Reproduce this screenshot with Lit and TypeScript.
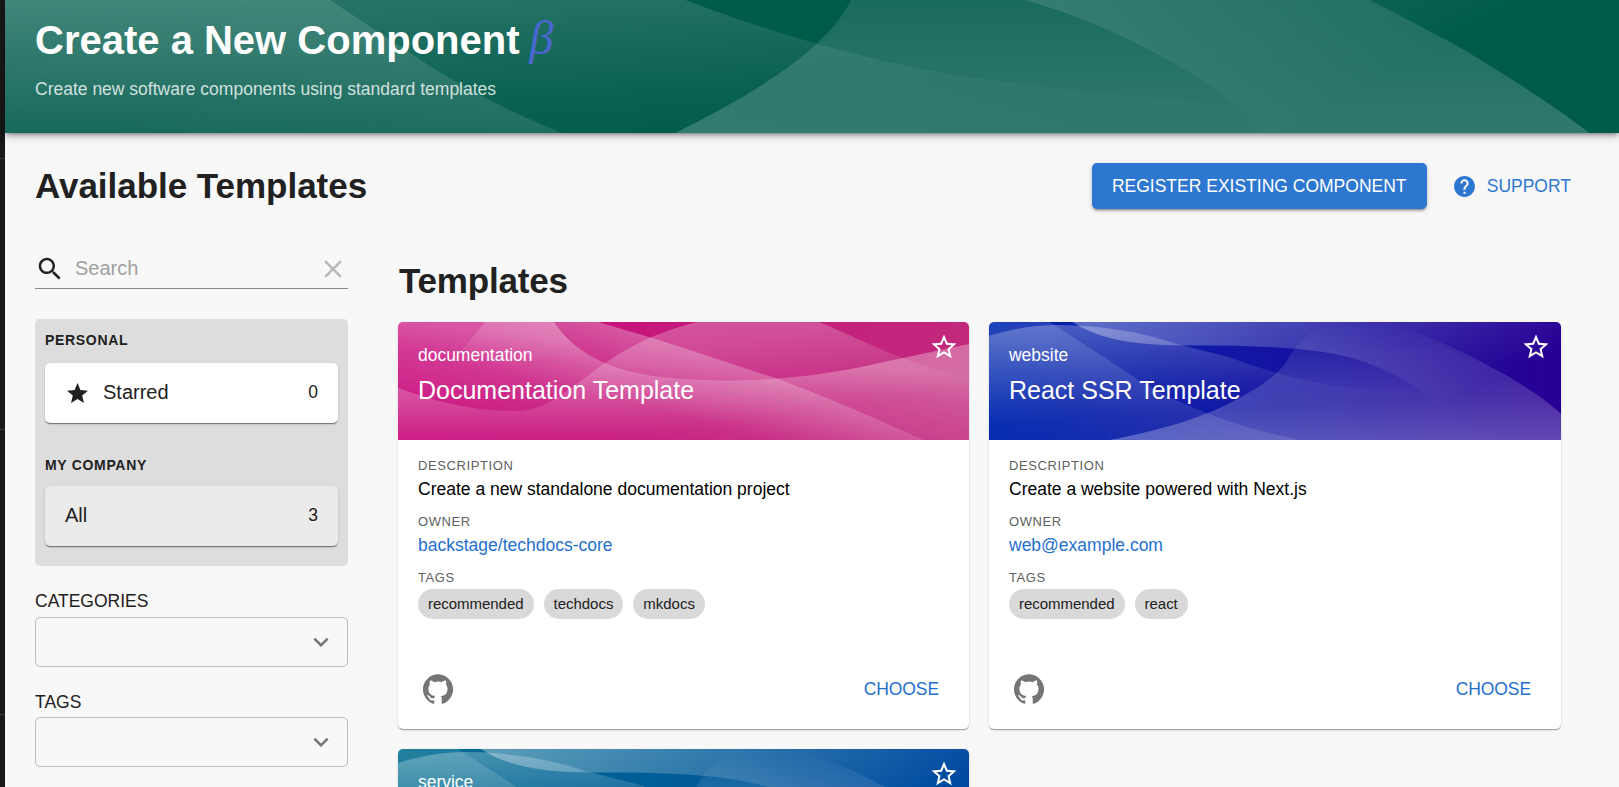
import { LitElement, html, svg, css, nothing } from "lit";
import { customElement, property } from "lit/decorators.js";

const icons = {
  search:
    "M15.5 14h-.79l-.28-.27C15.41 12.59 16 11.11 16 9.5 16 5.91 13.09 3 9.5 3S3 5.91 3 9.5 5.91 16 9.5 16c1.61 0 3.09-.59 4.23-1.57l.27.28v.79l5 4.99L20.49 19l-4.99-5zm-6 0C7.01 14 5 11.99 5 9.5S7.01 5 9.5 5 14 7.01 14 9.5 11.99 14 9.5 14z",
  clear:
    "M19 6.41L17.59 5 12 10.59 6.41 5 5 6.41 10.59 12 5 17.59 6.41 19 12 13.41 17.59 19 19 17.59 13.41 12z",
  star: "M12 17.27L18.18 21l-1.64-7.03L22 9.24l-7.19-.61L12 2 9.19 8.63 2 9.24l5.46 4.73L5.82 21z",
  starBorder:
    "M22 9.24l-7.19-.62L12 2 9.19 8.63 2 9.24l5.46 4.73L5.82 21 12 17.27 18.18 21l-1.63-7.03L22 9.24zM12 15.4l-3.76 2.27 1-4.28-3.32-2.88 4.38-.38L12 6.1l1.71 4.04 4.38.38-3.32 2.88 1 4.28L12 15.4z",
  expand: "M16.59 8.59L12 13.17 7.41 8.59 6 10l6 6 6-6z",
  help: "M12 2C6.48 2 2 6.48 2 12s4.48 10 10 10 10-4.48 10-10S17.52 2 12 2zm1 17h-2v-2h2v2zm2.07-7.75l-.9.92C13.45 12.9 13 13.5 13 15h-2v-.5c0-1.1.45-2.1 1.17-2.83l1.24-1.26c.37-.36.59-.86.59-1.41 0-1.1-.9-2-2-2s-2 .9-2 2H8c0-2.21 1.79-4 4-4s4 1.79 4 4c0 .88-.36 1.68-.93 2.25z",
  github:
    "M12 .3a12 12 0 0 0-3.8 23.4c.6.1.8-.3.8-.6v-2c-3.3.7-4-1.6-4-1.6-.6-1.4-1.4-1.8-1.4-1.8-1-.7.1-.7.1-.7 1.2 0 1.9 1.2 1.9 1.2 1 1.8 2.8 1.3 3.5 1 0-.8.4-1.3.7-1.6-2.7-.3-5.5-1.3-5.5-6 0-1.2.5-2.3 1.3-3.1-.2-.4-.6-1.6 0-3.2 0 0 1-.3 3.4 1.2a11.5 11.5 0 0 1 6 0c2.3-1.5 3.3-1.2 3.3-1.2.6 1.6.2 2.8 0 3.2.9.8 1.3 1.9 1.3 3.2 0 4.6-2.8 5.6-5.5 5.9.5.4.9 1 .9 2.2v3.3c0 .3.1.7.8.6A12 12 0 0 0 12 .3",
};

const icon = (d: string, cls: string) =>
  html`<svg class="icon ${cls}" viewBox="0 0 24 24" aria-hidden="true"><path d=${d}></path></svg>`;

const stop = (o: number, a: number) =>
  svg`<stop offset=${o} stop-color="#fff" stop-opacity=${a}></stop>`;

@customElement("wave-art")
class WaveArt extends LitElement {
  @property() shape = "wave";
  static styles = css`
    :host { display: block; width: 100%; height: 100%; }
    svg { display: block; width: 100%; height: 100%; }
  `;
  render() {
    if (this.shape === "hills") {
      return html`<svg viewBox="0 0 571 118" preserveAspectRatio="none">
        <defs>
          <linearGradient id="r" gradientUnits="userSpaceOnUse" x1="0" y1="-35" x2="-15" y2="117">${stop(0, 0.31)}${stop(0.23, 0.31)}${stop(0.4, 0.2)}${stop(0.62, 0.13)}${stop(1, 0)}</linearGradient>
          <linearGradient id="s" gradientUnits="userSpaceOnUse" x1="0" y1="-50" x2="-17.6" y2="25">${stop(0, 0.3)}${stop(1, 0)}</linearGradient>
          <linearGradient id="q" gradientUnits="userSpaceOnUse" x1="0" y1="20" x2="19" y2="147">${stop(0, 0.3)}${stop(0.4, 0.21)}${stop(1, 0)}</linearGradient>
        </defs>
        <path fill="url(#r)" d="M0 0H156C175 29 208 47 255 54C330 63 410 58 481 41L571 22V118H0Z"></path>
        <path fill="url(#s)" d="M87 0H200L261 18L380 57C440 79 482 99 526 118H0L41 56Z"></path>
        <path fill="url(#q)" d="M0 66C35 79 78 90 120 89C172 88 196 24 300 0H421C463 17 506 42 571 56V118H0Z"></path>
      </svg>`;
    }
    return html`<svg viewBox="0 0 1368 400" preserveAspectRatio="xMidYMid slice">
      <defs>
        <linearGradient id="a" gradientUnits="userSpaceOnUse" x1="0" y1="76" x2="14" y2="304">${stop(0, 0.27)}${stop(0.37, 0.155)}${stop(0.8, 0.035)}${stop(1, 0)}</linearGradient>
        <linearGradient id="b" gradientUnits="userSpaceOnUse" x1="0" y1="66" x2="0" y2="341">${stop(0, 0)}${stop(0.28, 0.1)}${stop(0.69, 0.19)}${stop(1, 0.28)}</linearGradient>
        <linearGradient id="c" gradientUnits="userSpaceOnUse" x1="0" y1="59" x2="-93" y2="370">${stop(0, 0.13)}${stop(1, 0)}</linearGradient>
        <linearGradient id="d" gradientUnits="userSpaceOnUse" x1="250" y1="66" x2="494" y2="553">${stop(0, 0.34)}${stop(1, 0)}</linearGradient>
      </defs>
      <path fill="url(#c)" d="M0 0H95C110 25 122 42 145 59L276 144L359 199C395 222 432 240 471 256C550 290 630 318 734 339L960 400H0Z"></path>
      <path fill="url(#a)" d="M0 92C60 74 115 65 172 66C300 68 400 94 451 112L578 144C650 172 760 205 857 214C1000 234 1150 238 1368 240V400H0Z"></path>
      <path fill="url(#b)" d="M100 400L289 341C410 318 505 288 569 256C655 213 698 180 717 144C745 98 770 78 820 66H968C1070 96 1150 140 1230 182C1290 218 1340 250 1368 279V400Z"></path>
      <path fill="url(#d)" d="M120 0C150 20 170 44 199 59C270 104 355 114 465 115C600 114 760 117 866 144C950 168 1040 220 1067 256L1130 330L1368 400V0Z"></path>
    </svg>`;
  }
}

interface Template {
  kind: string;
  theme: string;
  title?: string;
  description?: string;
  owner?: string;
  tags?: string[];
}

const templates: Template[] = [
  {
    kind: "documentation",
    title: "Documentation Template",
    theme: "pink",
    description: "Create a new standalone documentation project",
    owner: "backstage/techdocs-core",
    tags: ["recommended", "techdocs", "mkdocs"],
  },
  {
    kind: "website",
    title: "React SSR Template",
    theme: "blue",
    description: "Create a website powered with Next.js",
    owner: "web@example.com",
    tags: ["recommended", "react"],
  },
  { kind: "service", theme: "marine" },
];

@customElement("template-card")
class TemplateCard extends LitElement {
  @property({ attribute: false }) item!: Template;
  static styles = css`
    :host { display: flex; flex-direction: column; height: 407px; border-radius: 5px; overflow: hidden; background: #fff; box-shadow: 0 2px 1px -1px rgba(0,0,0,.2), 0 1px 1px rgba(0,0,0,.14), 0 1px 3px rgba(0,0,0,.12); }
    .banner { position: relative; height: 118px; flex: none; color: #fff; box-sizing: border-box; padding: 21px 20px 20px; }
    .pink { background: linear-gradient(90deg, #c8077a, #c2297d); }
    .blue { background: linear-gradient(90deg, #0027af, #270094); }
    .marine { background: linear-gradient(90deg, #006d8f, #0049a1); }
    .art { position: absolute; inset: 0; }
    .text { position: relative; }
    .kind { font-size: 17.5px; line-height: 25px; letter-spacing: -.02px; }
    .title { font-size: 25px; line-height: 30px; margin-top: 7px; }
    .icon { display: block; fill: currentColor; }
    .fav { position: absolute; top: 10px; right: 10px; width: 30px; height: 30px; }
    .body { padding: 20px 20px 0; flex: 1; }
    .label { font-size: 13px; line-height: 12px; letter-spacing: .6px; color: #606060; padding-bottom: 5px; }
    .value { font-size: 17.5px; line-height: 24px; margin-bottom: 15px; color: #000; }
    .link { color: #1f6fd0; }
    .tags { display: flex; gap: 10px; }
    .chip { height: 30px; line-height: 30px; border-radius: 15px; background: #d9d9d9; padding: 0 10px; font-size: 15px; color: #212121; letter-spacing: -.03px; }
    .foot { display: flex; align-items: center; justify-content: space-between; padding: 0 30px 25px 25px; }
    .gh { width: 30px; height: 30px; color: #757575; }
    .choose { font-size: 17.5px; line-height: 30px; color: #1f6fd0; letter-spacing: -.1px; }
  `;
  render() {
    const t = this.item;
    return html`
      <div class="banner ${t.theme}">
        <div class="art"><wave-art shape=${t.theme === "pink" ? "hills" : "wave"}></wave-art></div>
        <div class="text">
          <div class="kind">${t.kind}</div>
          ${t.title ? html`<div class="title">${t.title}</div>` : nothing}
        </div>
        ${icon(icons.starBorder, "fav")}
      </div>
      ${t.description
        ? html`<div class="body">
              <div class="label">DESCRIPTION</div>
              <div class="value">${t.description}</div>
              <div class="label">OWNER</div>
              <div class="value link">${t.owner}</div>
              <div class="label">TAGS</div>
              <div class="tags">${t.tags?.map((g) => html`<span class="chip">${g}</span>`)}</div>
            </div>
            <div class="foot">
              ${icon(icons.github, "gh")}
              <span class="choose">CHOOSE</span>
            </div>`
        : nothing}
    `;
  }
}

@customElement("app-root")
class AppRoot extends LitElement {
  static styles = css`
    :host { display: flex; width: 100%; height: 787px; overflow: hidden; background: #f8f8f8; font-family: "Liberation Sans", Arial, sans-serif; color: #212121; }
    .rail { width: 5px; flex: none; background: #181818; display: flex; flex-direction: column; padding-top: 158px; box-sizing: border-box; gap: 270px; }
    .rail i { height: 1px; background: #383838; flex: none; }
    .rail i + i + i { margin-top: 14px; }
    .page { flex: 1; min-width: 0; }
    .header { position: relative; height: 133px; background: #005b4b; box-sizing: border-box; padding: 17px 30px 0; box-shadow: 0 2px 4px -1px rgba(0,0,0,.4), 0 4px 8px rgba(0,0,0,.22); }
    .art { position: absolute; inset: 0; }
    .htext { position: relative; color: #fff; }
    .h1 { font-size: 40px; line-height: 46px; font-weight: 700; white-space: nowrap; height: 46px; }
    .beta { font: italic 400 48px/0 "Liberation Serif", serif; color: #4a66d0; margin-left: 10px; }
    .sub { font-size: 17.5px; line-height: 25px; margin-top: 14px; color: rgba(255,255,255,.8); }
    .top { display: flex; align-items: center; height: 46px; padding: 30px 48px 0 30px; }
    .h2 { font-size: 35px; line-height: 42px; font-weight: 700; letter-spacing: -.03px; }
    .top .h2 { flex: 1; }
    .btn { height: 46px; line-height: 46px; width: 335px; text-align: center; border-radius: 5px; background: #2e77d0; color: #fff; font-size: 17.5px; box-shadow: 0 3px 2px -2px rgba(0,0,0,.3), 0 2px 3px rgba(0,0,0,.16), 0 1px 6px rgba(0,0,0,.12); }
    .support { display: flex; align-items: center; gap: 10px; margin-left: 25px; font-size: 17.5px; color: #2e77d0; }
    .icon { display: block; fill: currentColor; flex: none; }
    .help { width: 25px; height: 25px; }
    .cols { display: grid; grid-template-columns: 313px 1163px; column-gap: 50px; padding: 40px 0 0 30px; }
    .search { display: flex; align-items: center; height: 39px; border-bottom: 1px solid #8a8a8a; }
    .i30 { width: 30px; height: 30px; }
    .ph { flex: 1; font-size: 20px; color: #a0a0a0; margin-left: 10px; }
    .clear { color: #b8b8b8; }
    .panel { background: #ddd; border-radius: 5px; margin-top: 30px; padding: 0 10px 20px; }
    .group { font-size: 14px; font-weight: 700; letter-spacing: .68px; line-height: 43px; padding-bottom: 1px; }
    .second { padding: 21px 0 0; line-height: 42px; }
    .row { display: flex; align-items: center; height: 60px; background: #fff; border-radius: 5px; padding: 0 20px; font-size: 20px; box-sizing: border-box; box-shadow: 0 2px 1px -1px rgba(0,0,0,.3), 0 1px 1px rgba(0,0,0,.2), 0 1px 3px rgba(0,0,0,.12); }
    .sel { background: #ebebeb; }
    .row .name { flex: 1; }
    .star { width: 25px; height: 25px; margin-right: 13px; }
    .row .name { padding-bottom: 1px; }
    .count { font-size: 17.5px; padding-bottom: 2px; }
    .flabel { font-size: 17.5px; line-height: 25px; margin-top: 23px; }
    .select { display: flex; align-items: center; justify-content: flex-end; box-sizing: border-box; height: 50px; border: 1px solid #bdbdbd; border-radius: 5px; padding-right: 11px; margin-top: 3px; color: #757575; }
    .f2 { margin-top: 23px; }
    .f2 + .select { margin-top: 2px; }
    .main { padding: 11px 0 0; }
    .grid { display: grid; grid-template-columns: 571px 572px; gap: 20px; margin-top: 20px; }
    .main .h2 { padding-left: 1px; letter-spacing: -.2px; }
  `;
  render() {
    return html`
      <div class="rail"><i></i><i></i><i></i></div>
      <div class="page">
        <div class="header">
          <div class="art"><wave-art></wave-art></div>
          <div class="htext">
            <div class="h1">Create a New Component<span class="beta">β</span></div>
            <div class="sub">Create new software components using standard templates</div>
          </div>
        </div>
        <div class="top">
          <div class="h2">Available Templates</div>
          <div class="btn">REGISTER EXISTING COMPONENT</div>
          <div class="support">${icon(icons.help, "help")}<span>SUPPORT</span></div>
        </div>
        <div class="cols">
          <div>
            <div class="search">
              ${icon(icons.search, "i30")}<span class="ph">Search</span>${icon(icons.clear, "i30 clear")}
            </div>
            <div class="panel">
              <div class="group">PERSONAL</div>
              <div class="row">${icon(icons.star, "star")}<span class="name">Starred</span><span class="count">0</span></div>
              <div class="group second">MY COMPANY</div>
              <div class="row sel"><span class="name">All</span><span class="count">3</span></div>
            </div>
            <div class="flabel">CATEGORIES</div>
            <div class="select">${icon(icons.expand, "i30")}</div>
            <div class="flabel f2">TAGS</div>
            <div class="select">${icon(icons.expand, "i30")}</div>
          </div>
          <div class="main">
            <div class="h2">Templates</div>
            <div class="grid">${templates.map((t) => html`<template-card .item=${t}></template-card>`)}</div>
          </div>
        </div>
      </div>
    `;
  }
}
